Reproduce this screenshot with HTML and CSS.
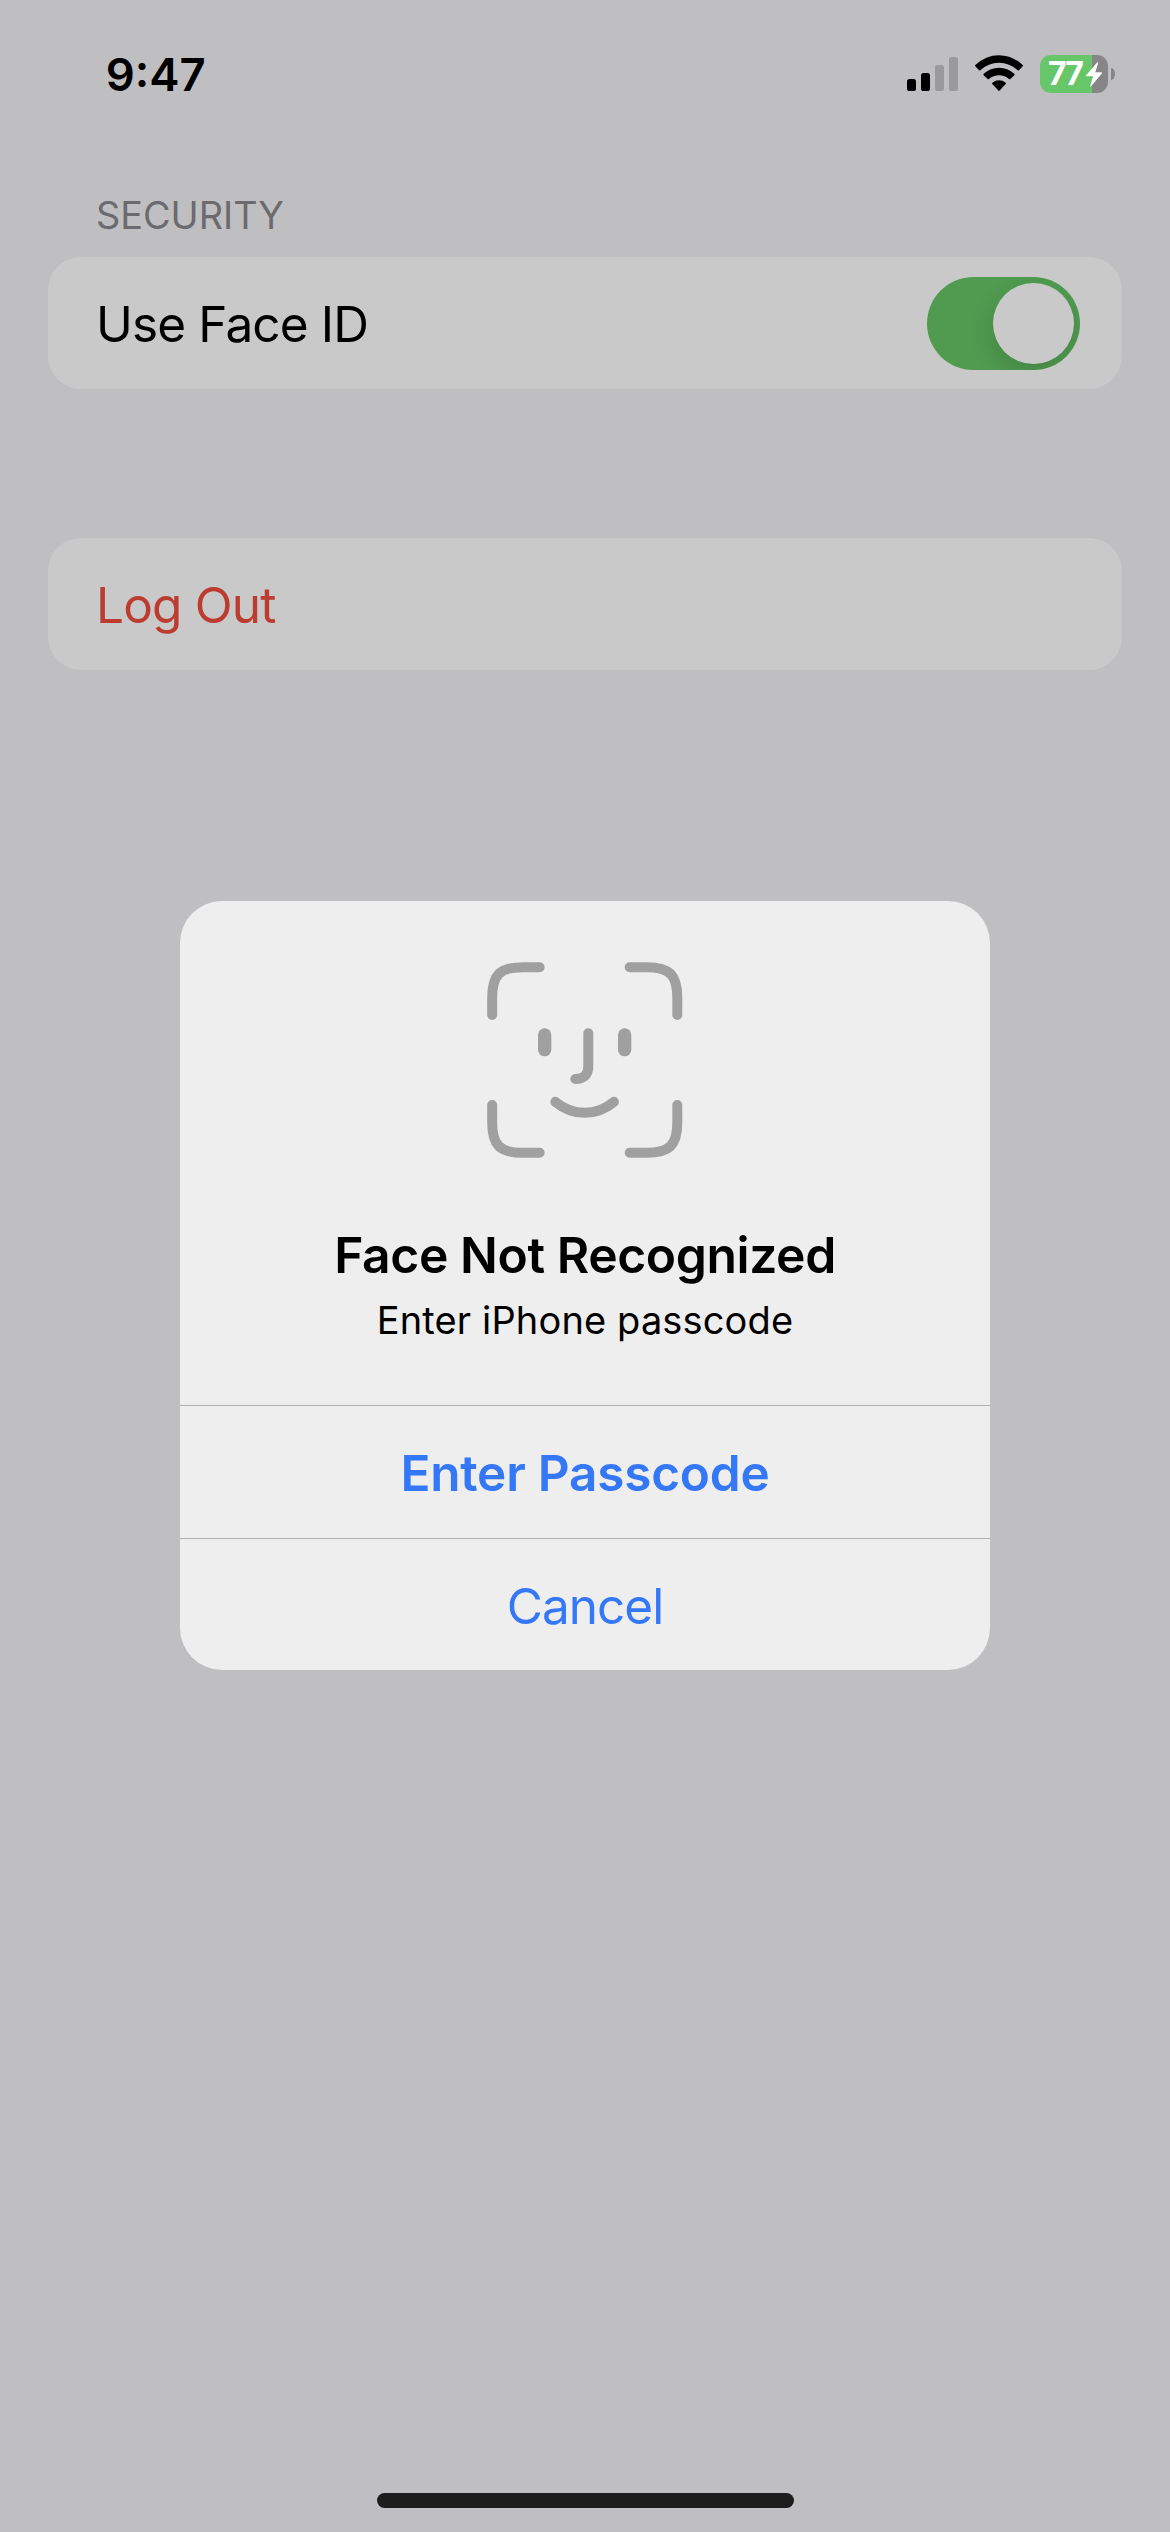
FILE: index.html
```html
<!DOCTYPE html>
<html lang="en">
<head>
<meta charset="utf-8">
<title>Security</title>
<link rel="stylesheet" href="styles.css">
</head>
<body>
<div class="screen">
  <header class="status">
    <span class="status-time">9:47</span>
    <div class="status-icons">
      <svg class="signal" viewBox="0 0 51 34" aria-hidden="true">
        <rect x="0" y="22" width="9" height="12" rx="2.6"/>
        <rect x="14" y="16" width="9" height="18" rx="2.6"/>
        <rect class="dim" x="28" y="8" width="9" height="26" rx="2.6"/>
        <rect class="dim" x="42" y="0" width="9" height="34" rx="2.6"/>
      </svg>
      <svg class="wifi" viewBox="285 75 144 108" aria-hidden="true">
        <path d="M286 105 Q317 75.500 357 75.500 Q397 75.500 428 105 Q430 107 428 109 L417 120.500 Q415 122.500 413 120.500 Q389 98 357 98 Q325 98 301 120.500 Q299 122.500 297 120.500 L286 109 Q284 107 286 105Z"/>
        <path d="M311 131.500 Q331 113 357 113 Q383 113 403 131.500 Q405 133.500 403 135.500 L391 147 Q389 149 387 147 Q374 136 357 136 Q340 136 327 147 Q325 149 323 147 L311 135.500 Q309 133.500 311 131.500Z"/>
        <path d="M337 158 Q346 151 357 151 Q368 151 377 158 Q379 160 377 162 L359 181.500 Q357 183.500 355 181.500 L337 162 Q335 160 337 158Z"/>
      </svg>
      <div class="battery">
        <div class="battery-body">
          <span>77</span>
          <svg class="bolt" viewBox="612 97 52 75" aria-hidden="true"><path d="M649 98 Q652 97 651.500 101 L643 128 H661 Q665 128 662 132 L631 169 Q627 173 628 168 L636 140 H617 Q613 140 616 136Z"/></svg>
        </div>
        <div class="battery-cap"></div>
      </div>
    </div>
  </header>

  <main class="settings">
    <h2 class="section-title">SECURITY</h2>
    <div class="card">
      <span class="label">Use Face ID</span>
      <div class="toggle" role="switch" aria-checked="true"><div class="knob"></div></div>
    </div>
    <div class="card card-logout">
      <span class="label logout">Log Out</span>
    </div>
  </main>

  <div class="overlay">
    <section class="dialog" role="dialog">
      <div class="dialog-body">
        <svg class="face" viewBox="52 66 586 588" aria-hidden="true">
          <g fill="none" stroke="#a0a0a0" stroke-width="30" stroke-linecap="round">
            <path d="M67.500 225 V174 C67.500 104 90 81.500 160 81.500 H210"/>
            <path d="M480 81.500 H530 C600 81.500 623 104 623 174 V225"/>
            <path d="M67.500 495 V546 C67.500 616 90 638.500 160 638.500 H210"/>
            <path d="M480 638.500 H530 C600 638.500 623 616 623 546 V495"/>
            <path d="M356 280 V378 Q356 417 317 417"/>
            <path d="M257 485.500 Q297 518.500 345 518.500 Q393 518.500 433 485.500"/>
          </g>
          <g fill="#a0a0a0">
            <rect x="205" y="265" width="40" height="84" rx="20"/>
            <rect x="445" y="265" width="40" height="84" rx="20"/>
          </g>
        </svg>
        <h1 class="dialog-title">Face Not Recognized</h1>
        <p class="dialog-text">Enter iPhone passcode</p>
      </div>
      <button class="action primary">Enter Passcode</button>
      <button class="action cancel">Cancel</button>
    </section>
  </div>

  <div class="home"></div>
</div>
</body>
</html>
```
FILE: styles.css
```css
* { box-sizing: border-box; }

body {
  margin: 0;
  font-family: Inter, "Liberation Sans", sans-serif;
}

.screen {
  position: relative;
  display: flex;
  flex-direction: column;
  width: 1170px;
  height: 2532px;
  overflow: hidden;
  background: #bfbfc1;
}

.status {
  display: flex;
  align-items: flex-start;
  justify-content: space-between;
  height: 185px;
  padding: 44.5px 55px 0 105.7px;
}

.status-time {
  font-size: 45.4px;
  font-weight: 600;
  line-height: 60px;
}

.status-icons { display: flex; padding-top: 10.500px; }

.signal { width: 51px; height: 34px; margin: 2px 17px 0 0; }
.signal .dim { fill: #9a9a9c; }

.wifi { width: 48px; height: 36px; margin-right: 17px; }

.battery { display: flex; align-items: center; gap: 3px; height: 38px; }

.battery-body {
  display: flex;
  align-items: center;
  width: 68px;
  height: 38px;
  padding-left: 8px;
  border-radius: 11px;
  background: linear-gradient(to right, #67c669 52px, #868688 52px);
  color: #fff;
  font-size: 32px;
  font-weight: 700;
  line-height: 38px;
  letter-spacing: -2px;
}

.bolt { width: 17.300px; height: 25px; margin-left: 3px; fill: #fff; }

.battery-cap {
  width: 4px;
  height: 12px;
  border-radius: 0 4px 4px 0 / 0 6px 6px 0;
  background: #868688;
}

.settings { display: flex; flex-direction: column; padding: 0 48px; }

.section-title {
  height: 72px;
  margin: 0;
  padding-left: 48px;
  color: #6b6b6f;
  font-size: 37.800px;
  font-weight: 400;
  line-height: 61px;
}

.card {
  display: flex;
  align-items: center;
  justify-content: space-between;
  height: 132px;
  padding: 0 42px 0 48px;
  border-radius: 33px;
  background: #c9c9c9;
}

.card-logout { margin-top: 149px; }

.label {
  padding-top: 2px;
  font-size: 49.500px;
  line-height: 60px;
  letter-spacing: -0.870px;
}

.logout { color: #bc3c30; letter-spacing: -0.790px; }

.toggle {
  display: flex;
  align-items: center;
  justify-content: flex-end;
  width: 153px;
  height: 93px;
  padding: 6px;
  border-radius: 47px;
  background: #509b50;
  overflow: hidden;
}

.knob {
  width: 81px;
  height: 81px;
  border-radius: 50%;
  background: #c9c9c9;
  box-shadow: 0 9px 24px rgba(0, 0, 0, 0.15);
}

.overlay {
  position: absolute;
  inset: 0;
  display: flex;
  align-items: flex-start;
  justify-content: center;
  padding-top: 901px;
}

.dialog {
  display: flex;
  flex-direction: column;
  width: 810px;
  height: 769px;
  border-radius: 42px;
  background: #eee;
  overflow: hidden;
}

.dialog-body {
  display: flex;
  flex-direction: column;
  align-items: center;
  height: 504px;
  padding-top: 61px;
}

.face { width: 195.300px; height: 196px; }

.dialog-title {
  margin: 67px 0 0;
  font-size: 49.800px;
  font-weight: 600;
  line-height: 60px;
  letter-spacing: -0.400px;
}

.dialog-text {
  margin: 10px 0 0;
  font-size: 38px;
  line-height: 50px;
  letter-spacing: 0.140px;
}

.action {
  height: 133px;
  padding: 3px 0 0;
  border: 0;
  border-top: 1px solid #b0b0b1;
  background: none;
  color: #3478f7;
  font: 400 49.500px/60px Inter, "Liberation Sans", sans-serif;
}

.primary { padding-top: 1px; font-weight: 600; letter-spacing: -0.220px; }
.cancel { height: 132px; letter-spacing: -1.010px; }

.home {
  align-self: center;
  width: 417px;
  height: 15px;
  margin: auto 0 24px 1px;
  border-radius: 8px;
  background: #1d1d1d;
}
```
